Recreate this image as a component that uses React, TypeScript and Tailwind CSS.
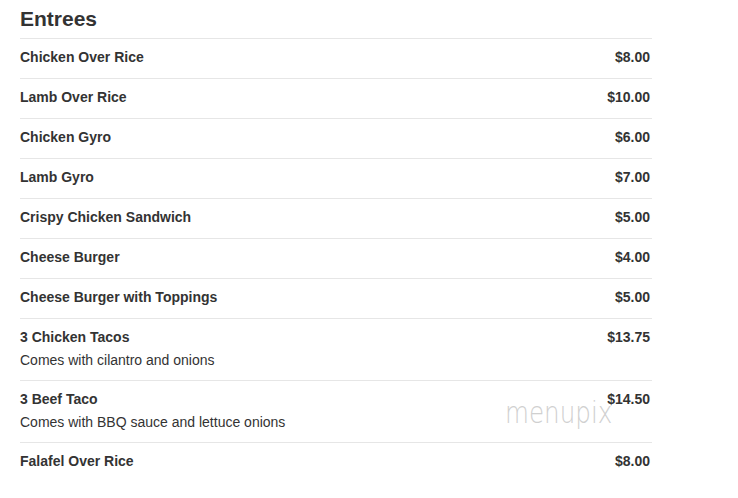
const items: { name: string; price: string; desc?: string }[] = [
  { name: "Chicken Over Rice", price: "$8.00" },
  { name: "Lamb Over Rice", price: "$10.00" },
  { name: "Chicken Gyro", price: "$6.00" },
  { name: "Lamb Gyro", price: "$7.00" },
  { name: "Crispy Chicken Sandwich", price: "$5.00" },
  { name: "Cheese Burger", price: "$4.00" },
  { name: "Cheese Burger with Toppings", price: "$5.00" },
  { name: "3 Chicken Tacos", price: "$13.75", desc: "Comes with cilantro and onions" },
  { name: "3 Beef Taco", price: "$14.50", desc: "Comes with BBQ sauce and lettuce onions" },
  { name: "Falafel Over Rice", price: "$8.00" },
];

export default function App() {
  return (
    <div className="relative h-[498px] w-[738px] overflow-hidden bg-white font-['Liberation_Sans',Arial,sans-serif] text-[#333]">
      <div className="ml-[20px] w-[632px]">
        <h2 className="pt-[6px] pb-[6px] text-[21px] font-bold leading-[26px]">Entrees</h2>
        {items.map((item) => (
          <div
            key={item.name}
            className={item.desc ? "border-t border-[#e6e6e6] pt-[8px] pb-[10px]" : "border-t border-[#e6e6e6] pt-[8px] pb-[11px]"}
          >
            <div className="flex justify-between pr-[2px] text-[14px] font-bold leading-[20px]">
              <span>{item.name}</span>
              <span>{item.price}</span>
            </div>
            {item.desc && <div className="mt-[4px] text-[14px] leading-[19px]">{item.desc}</div>}
          </div>
        ))}
      </div>
      {/* watermark */}
      <div className="absolute left-[505px] top-[398px] origin-left scale-x-[0.82] font-['DejaVu_Sans',sans-serif] text-[30px] font-extralight leading-[30px] text-[#d0d0d0]">
        menupix
      </div>
    </div>
  );
}
